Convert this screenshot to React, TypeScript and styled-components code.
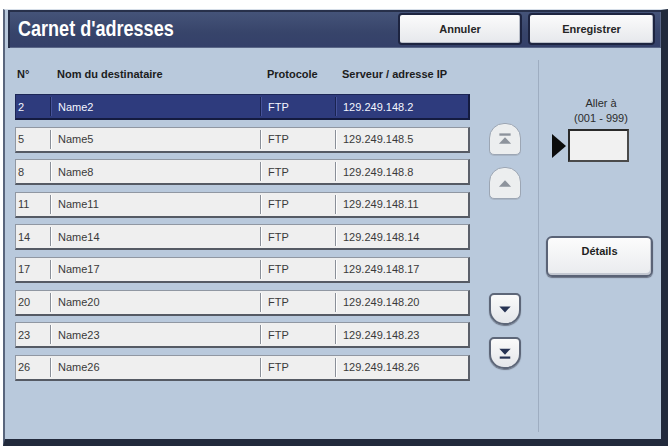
import styled, { createGlobalStyle } from "styled-components";

const GlobalStyle = createGlobalStyle`
    html, body {
        margin: 0;
        padding: 0;
        background: #ffffff;
    }
    body {
        font-family: "Liberation Sans", Arial, sans-serif;
    }
`;

type Entry = { no: number; name: string; protocol: string; address: string };

const entries: Entry[] = [2, 5, 8, 11, 14, 17, 20, 23, 26].map((n) => ({
    no: n,
    name: `Name${n}`,
    protocol: "FTP",
    address: `129.249.148.${n}`,
}));

type ArrowKind = "first" | "up" | "down" | "last";

function Arrow({ kind, color }: { kind: ArrowKind; color: string }) {
    return (
        <svg width="32" height="30" viewBox="0 0 32 30">
            {kind === "first" && (
                <>
                    <rect x="10" y="9" width="12" height="2.5" fill={color} />
                    <polygon points="9.5,20 22.5,20 16,13" fill={color} />
                </>
            )}
            {kind === "up" && <polygon points="9.5,19 22.5,19 16,12" fill={color} />}
            {kind === "down" && <polygon points="9.5,12 22.5,12 16,19" fill={color} />}
            {kind === "last" && (
                <>
                    <polygon points="9.5,10 22.5,10 16,17" fill={color} />
                    <rect x="10" y="19" width="12" height="2.5" fill={color} />
                </>
            )}
        </svg>
    );
}

function App() {
    return (
        <>
            <GlobalStyle />
            <Frame>
                <TitleBar>
                    <Title>Carnet d'adresses</Title>
                    <BarButtons>
                        <BarButton $width={124}>Annuler</BarButton>
                        <BarButton $width={127}>Enregistrer</BarButton>
                    </BarButtons>
                </TitleBar>
                <Body>
                    <ListArea>
                        <Table>
                            <HeadRow>
                                <HeadCell $first>N°</HeadCell>
                                <HeadCell>Nom du destinataire</HeadCell>
                                <HeadCell>Protocole</HeadCell>
                                <HeadCell>Serveur / adresse IP</HeadCell>
                            </HeadRow>
                            {entries.map((e, i) => (
                                <Row key={e.no} $selected={i === 0}>
                                    <Cell $first $selected={i === 0}>{e.no}</Cell>
                                    <Cell $selected={i === 0}>{e.name}</Cell>
                                    <Cell $selected={i === 0}>{e.protocol}</Cell>
                                    <Cell $selected={i === 0}>{e.address}</Cell>
                                </Row>
                            ))}
                        </Table>
                        <ScrollColumn>
                            <ScrollGroup>
                                <ScrollButton $down={false}>
                                    <Arrow kind="first" color="#8d939c" />
                                </ScrollButton>
                                <ScrollButton $down={false}>
                                    <Arrow kind="up" color="#8d939c" />
                                </ScrollButton>
                            </ScrollGroup>
                            <ScrollGroup $offset={94}>
                                <ScrollButton $down>
                                    <Arrow kind="down" color="#263253" />
                                </ScrollButton>
                                <ScrollButton $down>
                                    <Arrow kind="last" color="#263253" />
                                </ScrollButton>
                            </ScrollGroup>
                        </ScrollColumn>
                    </ListArea>
                    <Divider />
                    <SidePanel>
                        <GoLabel>
                            Aller à
                            <br />
                            (001 - 999)
                        </GoLabel>
                        <GoRow>
                            <Pointer />
                            <NumberBox />
                        </GoRow>
                        <DetailsButton>Détails</DetailsButton>
                    </SidePanel>
                </Body>
            </Frame>
        </>
    );
}

const Frame = styled.div`
    box-sizing: border-box;
    width: 665px;
    height: 437px;
    margin: 9px 0 0 3px;
    display: flex;
    flex-direction: column;
    background: #b9c9dc;
    border-left: 2px solid #59657c;
    border-top: 1px solid #d6dee8;
    border-right: 7px solid #222a3c;
    border-bottom: 7px solid #222a3c;
    padding-left: 3px;
`;

const TitleBar = styled.div`
    height: 38px;
    flex-shrink: 0;
    display: flex;
    align-items: center;
    justify-content: space-between;
    background: linear-gradient(#46557a, #37446a 60%, #34406a);
    box-shadow: inset 2px 2px 0 #27304a, inset -1px -1px 0 #5a6788;
    padding: 0 6px 0 10px;
`;

const Title = styled.h1`
    margin: 0;
    display: inline-block;
    transform: scaleX(0.82);
    transform-origin: left center;
    font-family: "Liberation Sans", Arial, sans-serif;
    font-size: 22px;
    font-weight: bold;
    color: #ffffff;
    white-space: nowrap;
    width: 154px;
`;

const BarButtons = styled.div`
    display: flex;
    gap: 6px;
`;

const BarButton = styled.button<{ $width: number }>`
    box-sizing: border-box;
    width: ${(p) => p.$width}px;
    height: 32px;
    border: 2px solid #1d2440;
    border-radius: 4px;
    background: linear-gradient(#fbfbfb, #e6e8ec);
    box-shadow: inset -1px -1px 0 #b9bec8;
    font-family: "Liberation Sans", Arial, sans-serif;
    font-size: 11px;
    font-weight: bold;
    color: #262626;
    padding: 0;
`;

const Body = styled.div`
    flex: 1;
    display: flex;
`;

const ListArea = styled.div`
    width: 530px;
    display: flex;
    padding: 18px 0 0 7px;
    box-sizing: border-box;
`;

const Table = styled.div`
    width: 455px;
    display: flex;
    flex-direction: column;
`;

const columns = "34px 210px 75px 136px";

const HeadRow = styled.div`
    display: grid;
    grid-template-columns: ${columns};
    height: 16px;
    line-height: 16px;
    margin-bottom: 12px;
`;

const HeadCell = styled.div<{ $first?: boolean }>`
    padding-left: ${(p) => (p.$first ? 2 : 8)}px;
    font-size: 11px;
    font-weight: bold;
    color: #1c1c1c;
    white-space: nowrap;
`;

const Row = styled.div<{ $selected: boolean }>`
    box-sizing: border-box;
    display: grid;
    grid-template-columns: ${columns};
    height: 26px;
    margin-bottom: 6.6px;
    background: ${(p) => (p.$selected ? "#2e3b7d" : "#efefef")};
    border: 1px solid ${(p) => (p.$selected ? "#1c2656" : "#9097a2")};
    border-right: 2px solid ${(p) => (p.$selected ? "#141b40" : "#5b606a")};
    border-bottom: 2px solid ${(p) => (p.$selected ? "#141b40" : "#555a64")};
`;

const Cell = styled.div<{ $first?: boolean; $selected: boolean }>`
    display: flex;
    align-items: center;
    padding-left: ${(p) => (p.$first ? 2 : 7)}px;
    font-size: 11px;
    color: ${(p) => (p.$selected ? "#f4f6ff" : "#3a3a3a")};
    border-left: ${(p) =>
        p.$first ? "none" : `1px solid ${p.$selected ? "#1a2350" : "#8a8f98"}`};
    box-shadow: ${(p) =>
        p.$first ? "none" : `inset 1px 0 0 ${p.$selected ? "#46539a" : "#ffffff"}`};
    white-space: nowrap;
    margin: 2px 0;
`;

const ScrollColumn = styled.div`
    margin-left: 19px;
    padding-top: 57px;
    display: flex;
    flex-direction: column;
`;

const ScrollGroup = styled.div<{ $offset?: number }>`
    display: flex;
    flex-direction: column;
    gap: 12px;
    margin-top: ${(p) => p.$offset ?? 0}px;
`;

const ScrollButton = styled.div<{ $down: boolean }>`
    box-sizing: border-box;
    width: 32px;
    height: 32px;
    display: flex;
    align-items: center;
    justify-content: center;
    background: ${(p) => (p.$down ? "linear-gradient(#fafafa, #e4e6ea)" : "#eceeef")};
    border: ${(p) => (p.$down ? "2px solid #5d6678" : "1px solid #9ca6b4")};
    border-radius: ${(p) => (p.$down ? "5px 5px 15px 15px" : "15px 15px 5px 5px")};
    box-shadow: ${(p) => (p.$down ? "0 1px 1px #6e7788" : "0 1px 0 #a9b6c6")};
`;

const Divider = styled.div`
    width: 1px;
    background: #9eadc1;
    margin: 12px 0 7px;
`;

const SidePanel = styled.div`
    flex: 1;
    display: flex;
    flex-direction: column;
    padding-top: 48px;
`;

const GoLabel = styled.div`
    text-align: center;
    font-size: 11px;
    line-height: 15px;
    color: #2b2b2b;
    padding-left: 2px;
`;

const GoRow = styled.div`
    display: flex;
    align-items: center;
    margin-top: 3px;
    padding-left: 13px;
`;

const Pointer = styled.div`
    width: 0;
    height: 0;
    border-top: 12.5px solid transparent;
    border-bottom: 12.5px solid transparent;
    border-left: 14px solid #0c0c0c;
    margin-right: 2px;
`;

const NumberBox = styled.div`
    box-sizing: border-box;
    width: 61px;
    height: 33px;
    background: #f1f1f1;
    border: 2px solid #2a2a2a;
    border-right-color: #4a4a4a;
    border-bottom-color: #4a4a4a;
`;

const DetailsButton = styled.button`
    box-sizing: border-box;
    width: 107px;
    height: 41px;
    margin: 74px 0 0 7px;
    padding: 0 0 12px;
    border: 2px solid #5a6376;
    border-radius: 6px;
    background: linear-gradient(#fcfcfc, #e9ebee);
    box-shadow: inset -1px -2px 0 #c4c9d2, 0 1px 1px #6a7282;
    font-family: "Liberation Sans", Arial, sans-serif;
    font-size: 11px;
    font-weight: bold;
    color: #1e1e1e;
`;

export default App;
